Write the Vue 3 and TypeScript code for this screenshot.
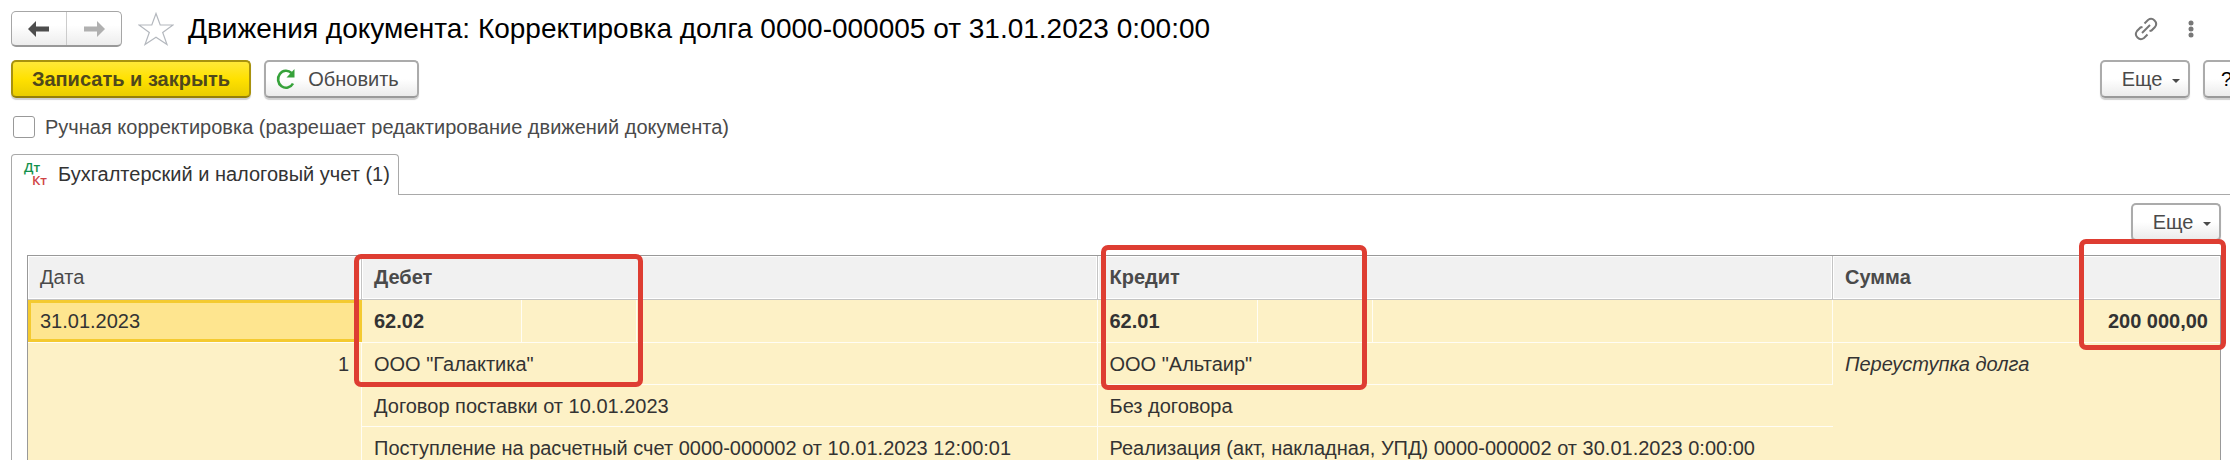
<script setup lang="ts">
import { ref } from 'vue'

interface Side {
  account: string
  lines: string[]
}

interface Entry {
  date: string
  number: number
  debit: Side
  credit: Side
  amount: string
  note: string
}

const manual = ref(false)

const entry: Entry = {
  date: '31.01.2023',
  number: 1,
  debit: {
    account: '62.02',
    lines: [
      'ООО "Галактика"',
      'Договор поставки от 10.01.2023',
      'Поступление на расчетный счет 0000-000002 от 10.01.2023 12:00:01',
    ],
  },
  credit: {
    account: '62.01',
    lines: [
      'ООО "Альтаир"',
      'Без договора',
      'Реализация (акт, накладная, УПД) 0000-000002 от 30.01.2023 0:00:00',
    ],
  },
  amount: '200 000,00',
  note: 'Переуступка долга',
}
</script>

<template>
  <main class="page">
    <header class="title-bar">
      <div class="nav">
        <button type="button" aria-label="Назад">
          <svg width="22" height="18" viewBox="0 0 22 18"><path d="M0 9 8 1v5.500h13v5H8V17z" fill="#4d4d4d" /></svg>
        </button>
        <button type="button" aria-label="Вперед">
          <svg width="22" height="18" viewBox="0 0 22 18"><path d="M22 9 14 1v5.500H1v5h13V17z" fill="#b0b0b0" /></svg>
        </button>
      </div>
      <button type="button" class="plain" aria-label="В избранное">
        <svg width="36" height="34" viewBox="0 0 36 34">
          <path d="M18 1.500 22.200 13H35L24.700 20.400 29 32.500 18 25.200 7 32.500 11.300 20.400 1 13H13.800z" fill="#fff" stroke="#b4b8be" stroke-width="1.200" />
        </svg>
      </button>
      <h1>Движения документа: Корректировка долга 0000-000005 от 31.01.2023 0:00:00</h1>
      <div class="tools">
        <button type="button" class="plain" aria-label="Получить ссылку">
          <svg width="24" height="24" viewBox="0 0 24 24" fill="none" stroke="#777" stroke-width="2">
            <path d="M8 16 16 8" />
            <path d="M10.500 6.500 14 3a5 5 0 0 1 7 7l-3.500 3.500-2 .5" />
            <path d="M8.500 10 6.500 10.500 3 14a5 5 0 0 0 7 7l3.500-3.500" />
          </svg>
        </button>
        <button type="button" class="plain" aria-label="Меню">
          <svg width="6" height="18" viewBox="0 0 6 18" fill="#777">
            <circle cx="3" cy="3" r="2.500" /><circle cx="3" cy="9" r="2.500" /><circle cx="3" cy="15" r="2.500" />
          </svg>
        </button>
      </div>
    </header>

    <div class="commands">
      <button type="button" class="btn primary">Записать и закрыть</button>
      <button type="button" class="btn refresh">
        <svg width="20" height="22" viewBox="0 0 20 22">
          <path d="M15.500 5A8 8.500 0 1 0 17 15.500" fill="none" stroke="#36a23a" stroke-width="2.600" />
          <path d="M18.500 1v8.500h-8z" fill="#36a23a" />
        </svg>
        Обновить
      </button>
      <span class="spacer"></span>
      <button type="button" class="btn more">Еще<i class="caret"></i></button>
      <button type="button" class="btn help">?</button>
    </div>

    <label class="manual">
      <input v-model="manual" type="checkbox" />
      Ручная корректировка (разрешает редактирование движений документа)
    </label>

    <div class="tabs" role="tablist">
      <button type="button" class="tab" role="tab" aria-selected="true">
        <svg class="dk" width="25" height="24" viewBox="0 0 25 24">
          <text x="0" y="10" fill="#12914c">Дт</text>
          <text x="8" y="23" fill="#cf4345">Кт</text>
        </svg>
        Бухгалтерский и налоговый учет (1)
      </button>
    </div>

    <section class="panel" role="tabpanel">
      <div class="panel-commands">
        <button type="button" class="btn more">Еще<i class="caret"></i></button>
      </div>
      <table>
        <colgroup>
          <col class="c-date" />
          <col class="c-account" /><col class="c-extra" /><col />
          <col class="c-account" /><col class="c-extra" /><col />
          <col class="c-sum" />
        </colgroup>
        <thead>
          <tr>
            <th class="date-head" scope="col">Дата</th>
            <th scope="colgroup" colspan="3">Дебет<span class="mark mark-debit"></span></th>
            <th scope="colgroup" colspan="3">Кредит<span class="mark mark-credit"></span></th>
            <th scope="col">Сумма<span class="mark mark-sum"></span></th>
          </tr>
        </thead>
        <tbody>
          <tr class="accounts">
            <td class="selected">{{ entry.date }}</td>
            <td class="strong">{{ entry.debit.account }}</td>
            <td></td>
            <td></td>
            <td class="strong">{{ entry.credit.account }}</td>
            <td></td>
            <td></td>
            <td class="strong amount">{{ entry.amount }}</td>
          </tr>
          <tr v-for="(line, i) in entry.debit.lines" :key="i">
            <td v-if="i === 0" class="number" :rowspan="entry.debit.lines.length">{{ entry.number }}</td>
            <td colspan="3">{{ line }}</td>
            <td colspan="3">{{ entry.credit.lines[i] }}</td>
            <td v-if="i === 0" class="note" :rowspan="entry.debit.lines.length">{{ entry.note }}</td>
          </tr>
        </tbody>
      </table>
    </section>
  </main>
</template>

<style>
body {
  margin: 0;
  background: #fff;
}
</style>

<style scoped>
.page {
  box-sizing: border-box;
  height: 100vh;
  overflow: hidden;
  padding: 11px 0 0 11px;
  font: 20px/24px "Liberation Sans", Arial, sans-serif;
  color: #4a4a4a;
}

button {
  box-sizing: border-box;
  font: inherit;
  color: inherit;
  padding: 0;
  margin: 0;
}

svg {
  display: block;
  flex: none;
}

.title-bar {
  display: flex;
  align-items: center;
  height: 36px;
}

.nav {
  box-sizing: border-box;
  display: flex;
  width: 111px;
  height: 36px;
  border: 1px solid #a6a6a6;
  border-bottom: 2px solid #999;
  border-radius: 5px;
  background: linear-gradient(#fff 40%, #ededed);
}

.nav button {
  flex: 1;
  display: flex;
  align-items: center;
  justify-content: center;
  border: 0;
  background: none;
}

.nav button + button {
  border-left: 1px solid #ccc;
}

.plain {
  border: 0;
  background: none;
}

.title-bar > .plain {
  margin-left: 16px;
}

h1 {
  margin: 0 0 0 14px;
  font-size: 28px;
  line-height: 36px;
  font-weight: 400;
  color: #000;
  white-space: nowrap;
}

.tools {
  display: flex;
  align-items: center;
  gap: 30px;
  margin-left: auto;
  padding-right: 36px;
}

.commands {
  display: flex;
  gap: 13px;
  margin: 13px -20px 0 0;
}

.spacer {
  flex: 1;
}

.btn {
  display: flex;
  align-items: center;
  justify-content: center;
  height: 38px;
  border: 2px solid #ababab;
  border-bottom-color: #999;
  border-radius: 5px;
  background: linear-gradient(#fff 50%, #ebebeb);
  box-shadow: 0 2px 1px #d0d0d0;
  white-space: nowrap;
}

.primary {
  width: 240px;
  border-color: #a8920e;
  border-bottom-color: #958008;
  background: linear-gradient(#ffe838, #ffe100 50%, #e9cd00);
  font-weight: 700;
  color: #4f481c;
}

.refresh {
  width: 155px;
  gap: 12px;
  padding-right: 8px;
}

.more {
  width: 90px;
  gap: 10px;
  padding-left: 12px;
}

.caret {
  border: 4px solid transparent;
  border-top-color: #4a4a4a;
  border-bottom: 0;
  margin-top: 4px;
}

.help {
  width: 47px;
  color: #000;
}

.manual {
  display: flex;
  align-items: center;
  gap: 10px;
  width: max-content;
  margin: 17px 0 0 2px;
}

.manual input {
  appearance: none;
  box-sizing: border-box;
  width: 22px;
  height: 22px;
  margin: 0;
  border: 1px solid #999;
  border-radius: 3px;
  background: #fff;
}

.manual input:checked {
  background: #ffe100;
}

.tabs {
  margin-top: 15px;
  display: flex;
}

.tab {
  position: relative;
  z-index: 1;
  display: flex;
  align-items: center;
  gap: 9px;
  height: 41px;
  padding: 0 8px 2px 12px;
  margin-bottom: -1px;
  border: 1px solid #a9a9a9;
  border-bottom: 0;
  border-radius: 4px 4px 0 0;
  background: #fff;
  color: #333;
  white-space: nowrap;
}

.dk {
  overflow: visible;
  font: 600 13px "Open Sans", sans-serif;
}

.panel {
  border: 1px solid #a9a9a9;
  border-width: 1px 0 0 1px;
  padding: 8px 9px 0 15px;
}

.panel-commands {
  display: flex;
  justify-content: flex-end;
  margin-bottom: 14px;
}

table {
  width: 100%;
  table-layout: fixed;
  border-collapse: separate;
  border-spacing: 0;
  border: 1px solid #999;
  border-bottom: 0;
  color: #333;
}

.c-date {
  width: 334px;
}

.c-account {
  width: 160px;
}

.c-extra {
  width: 115px;
}

.c-sum {
  width: 387px;
}

th,
td {
  box-sizing: border-box;
  height: 42px;
  padding: 0 12px;
  text-align: left;
  white-space: nowrap;
}

th {
  position: relative;
  height: 44px;
  padding-bottom: 2px;
  border-right: 1px solid #c4c4c4;
  border-bottom: 1px solid #c4c4c4;
  background: #f1f1f1;
  box-shadow: inset 0 0 0 1px #fff;
  color: #4a4a4a;
}

th:last-child,
td:last-child {
  border-right: 0;
}

.date-head {
  font-weight: 400;
}

td {
  border-right: 1px solid #fffdf4;
  border-bottom: 1px solid #fffdf4;
  background: #fdf1c6;
}

.accounts td {
  height: 43px;
}

.strong {
  font-weight: 700;
}

.accounts .selected {
  border-right: 0;
  background: #fee58f;
  box-shadow: inset 0 0 0 3px #f4ca30;
}

.amount {
  text-align: right;
}

.number,
.note {
  vertical-align: top;
  padding-top: 9px;
}

.number {
  text-align: right;
}

.note {
  border-right: 0;
  font-style: italic;
}

.mark {
  position: absolute;
  z-index: 2;
  box-sizing: border-box;
  border: 5px solid #de3d32;
  border-radius: 7px;
  pointer-events: none;
}

.mark-debit {
  left: -8px;
  top: -2px;
  width: 289px;
  height: 133px;
}

.mark-credit {
  left: 3px;
  top: -11px;
  width: 266px;
  height: 145px;
}

.mark-sum {
  right: -6px;
  top: -17px;
  width: 147px;
  height: 111px;
}
</style>
